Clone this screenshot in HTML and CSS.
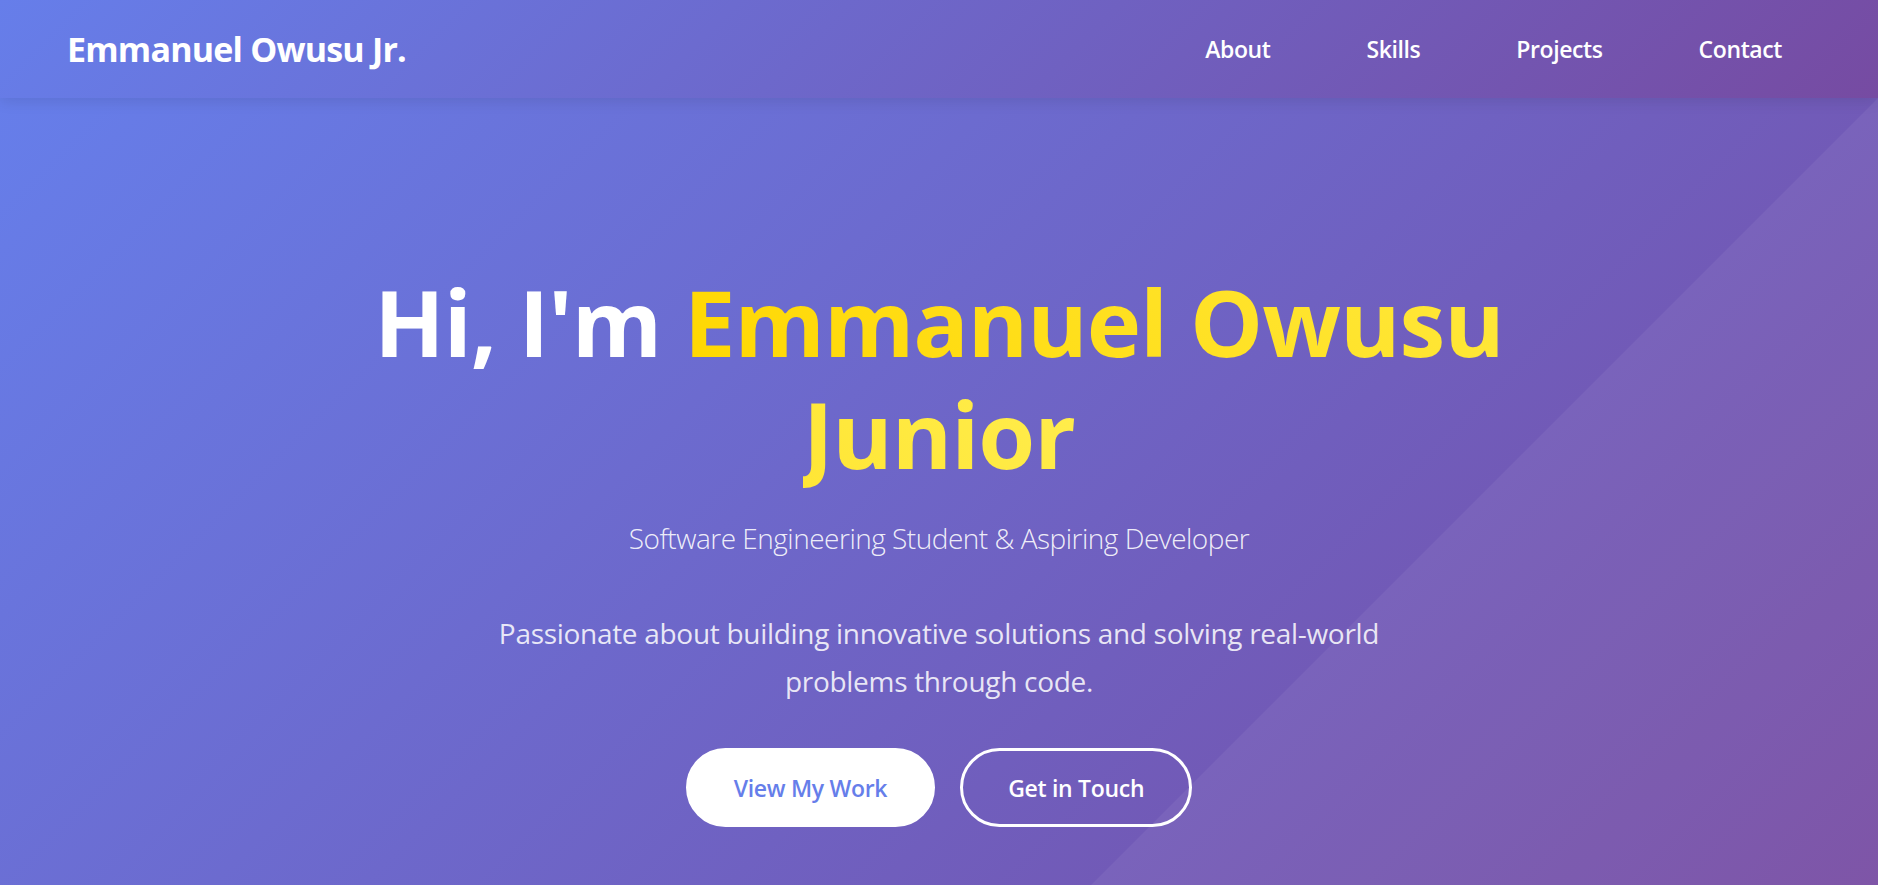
FILE: index.html
```html
<!DOCTYPE html>
<html lang="en">
<head>
<meta charset="utf-8">
<title>Emmanuel Owusu Jr.</title>
<link rel="stylesheet" href="styles.css">
</head>
<body>
<header class="site-header">
  <a class="logo" href="#">Emmanuel Owusu Jr.</a>
  <nav>
    <ul class="nav-list">
      <li><a class="nav-link" href="#about">About</a></li>
      <li><a class="nav-link" href="#skills">Skills</a></li>
      <li><a class="nav-link" href="#projects">Projects</a></li>
      <li><a class="nav-link" href="#contact">Contact</a></li>
    </ul>
  </nav>
</header>
<section class="hero">
  <div class="hero-shape"></div>
  <div class="hero-content">
    <h1 class="hero-title">Hi, I'm <span class="highlight">Emmanuel Owusu Junior</span></h1>
    <p class="hero-subtitle">Software Engineering Student &amp; Aspiring Developer</p>
    <p class="hero-desc">Passionate about building innovative solutions and solving real-world problems through code.</p>
    <div class="hero-buttons">
      <a class="btn btn-primary" href="#projects">View My Work</a>
      <a class="btn btn-secondary" href="#contact">Get in Touch</a>
    </div>
  </div>
</section>
</body>
</html>
```
FILE: styles.css
```css
* { box-sizing: border-box; }
html, body { margin: 0; padding: 0; }
body {
  font-family: "Open Sans", "Noto Sans", sans-serif;
  color: #fff;
  overflow: hidden;
  height: 885px;
}
a { text-decoration: none; color: inherit; }

.site-header {
  position: relative;
  z-index: 2;
  height: 98px;
  padding: 0 72px 0 67px;
  display: flex;
  align-items: center;
  justify-content: space-between;
  background: linear-gradient(135deg, #667eea 0%, #764ba2 100%);
  box-shadow: 0 3px 14px rgba(0, 0, 0, 0.1);
}
.logo {
  font-size: 34px;
  font-weight: 700;
  letter-spacing: -0.8px;
  color: #fff;
}
.nav-list {
  list-style: none;
  margin: 0;
  padding: 0;
  display: flex;
  gap: 48px;
}
.nav-link {
  display: block;
  padding: 12px 24px;
  font-size: 23px;
  font-weight: 600;
  letter-spacing: -0.4px;
  color: #fff;
}

.hero {
  position: relative;
  height: 787px;
  overflow: hidden;
  background: linear-gradient(135deg, #667eea 0%, #764ba2 100%);
}
.hero-shape {
  position: absolute;
  top: 0;
  right: 0;
  height: 100%;
  aspect-ratio: 1 / 1;
  background: rgba(255, 255, 255, 0.06);
  clip-path: polygon(100% 0, 100% 100%, 0 100%);
}
.hero-content {
  position: relative;
  display: flex;
  flex-direction: column;
  align-items: center;
  text-align: center;
  padding-top: 168px;
}
.hero-title {
  margin: 0 0 26px;
  max-width: 1200px;
  font-size: 92px;
  line-height: 112px;
  font-weight: 700;
  letter-spacing: -1px;
  color: #fff;
}
.highlight {
  background: linear-gradient(45deg, #ffd700, #ffed4e);
  -webkit-background-clip: text;
  background-clip: text;
  color: transparent;
}
.hero-subtitle {
  margin: 0 0 48px;
  font-size: 28px;
  line-height: 45px;
  font-weight: 300;
  letter-spacing: -0.5px;
  color: rgba(255, 255, 255, 0.9);
}
.hero-desc {
  margin: 0 0 43px;
  max-width: 920px;
  font-size: 28px;
  line-height: 48px;
  font-weight: 400;
  letter-spacing: -0.3px;
  color: rgba(255, 255, 255, 0.85);
}
.hero-buttons {
  display: flex;
  gap: 25px;
}
.btn {
  display: inline-block;
  padding: 22.5px 45px;
  border: 3px solid #fff;
  border-radius: 50px;
  font-size: 23px;
  line-height: 28px;
  font-weight: 600;
  letter-spacing: -0.3px;
}
.btn-primary {
  background: #fff;
  color: #667eea;
}
.btn-secondary {
  background: transparent;
  color: #fff;
}
```
